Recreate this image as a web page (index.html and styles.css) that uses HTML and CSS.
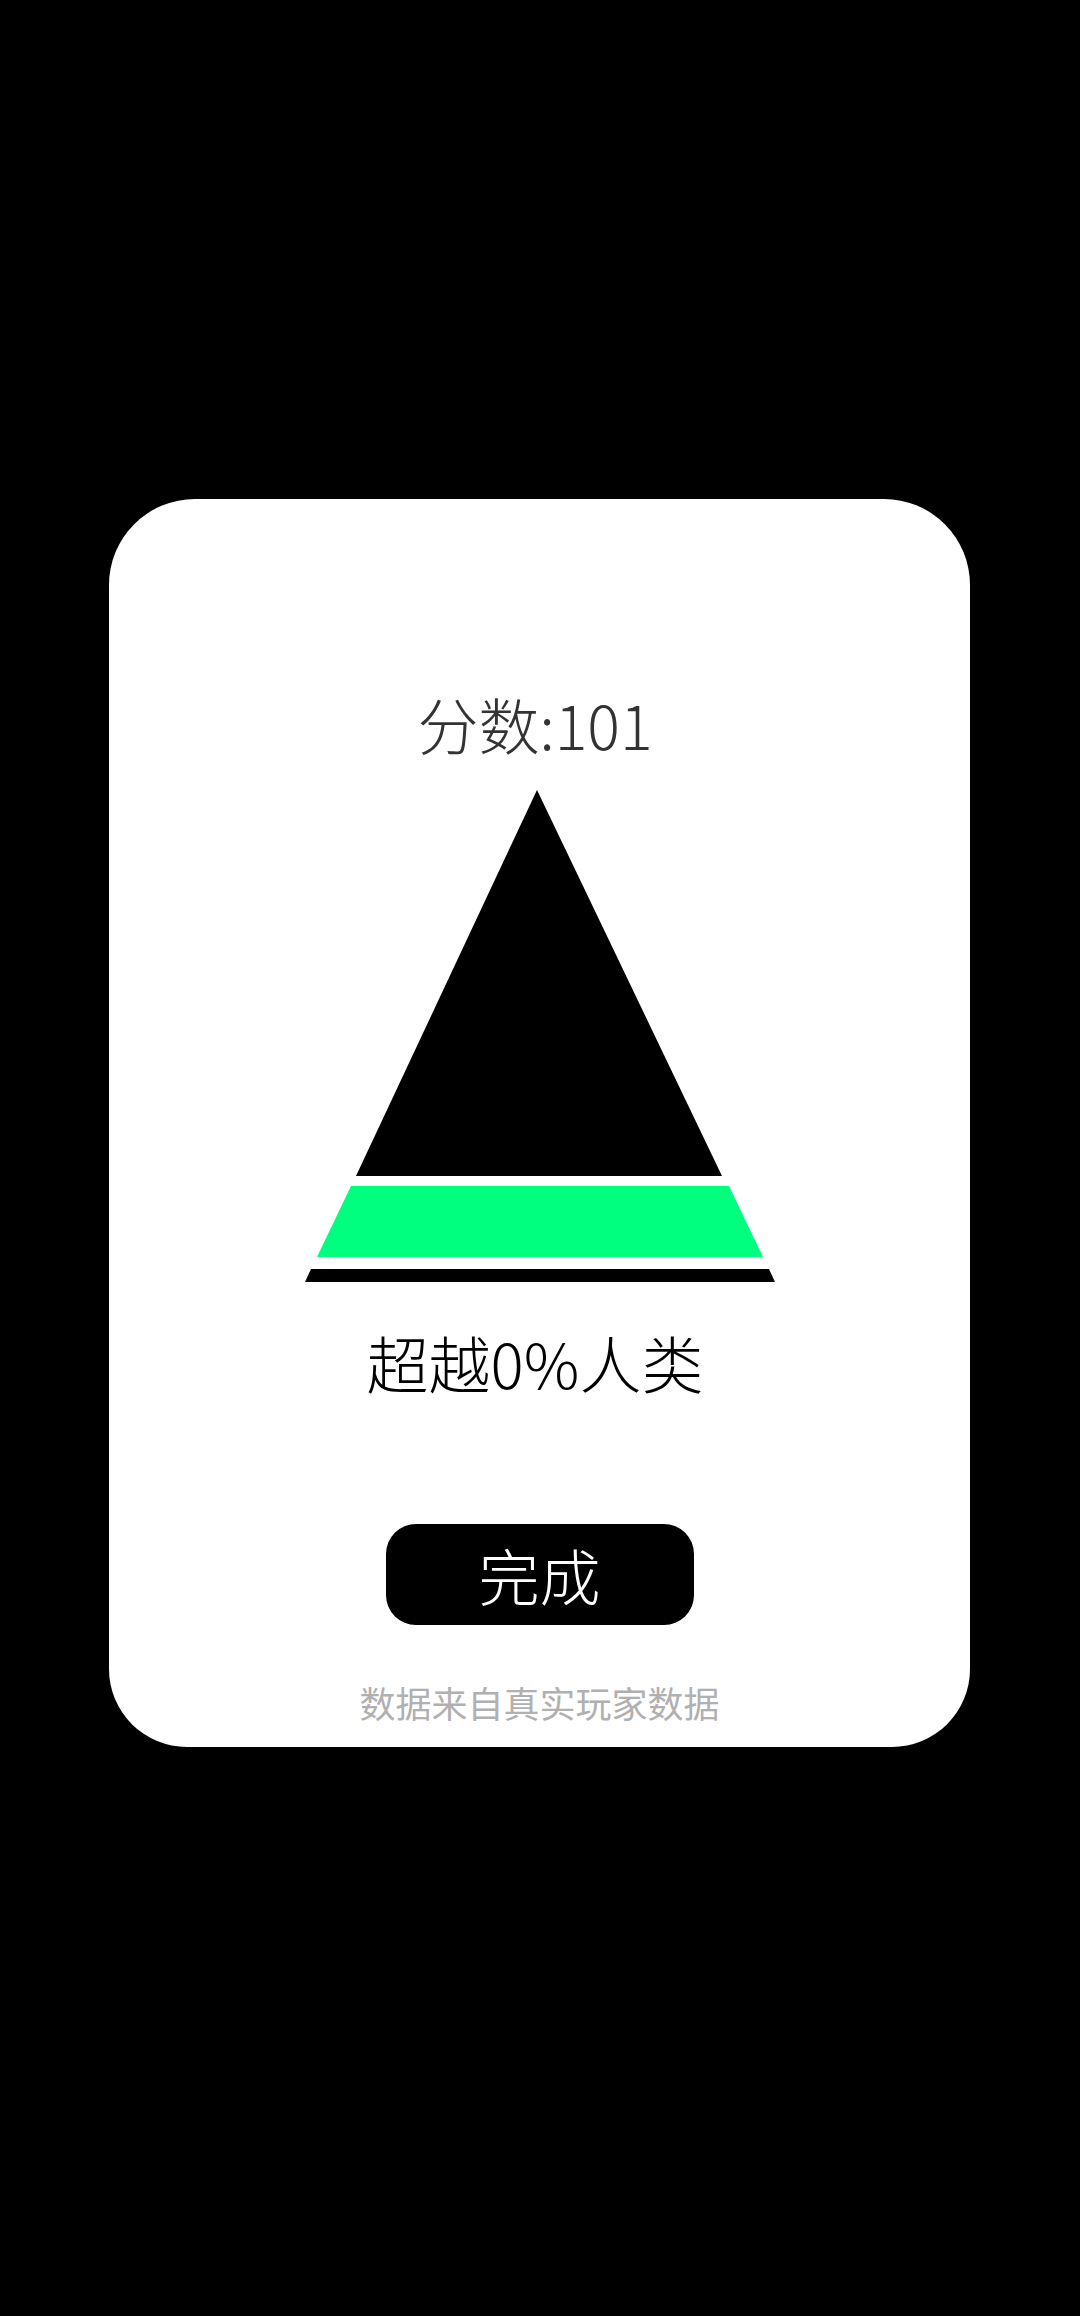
FILE: index.html
```html
<!DOCTYPE html>
<html lang="zh-CN">
<head>
    <meta charset="UTF-8">
    <meta name="viewport" content="width=device-width, initial-scale=1.0">
    <title>分数</title>
    <link rel="stylesheet" href="styles.css">
</head>
<body>
    <div class="result-card">
        <div class="score-text">分数:101</div>

        <!-- 금자탑: 위 검정 삼각형, 중간 초록 띠, 아래 검정 띠 -->
        <svg class="pyramid" width="470" height="495" viewBox="0 0 470 495">
            <polygon points="232,0 417,386 51,386" fill="#000"/>
            <polygon points="46,396 424,396 458,467 12,467" fill="#00ff7f"/>
            <polygon points="6,479 464,479 470,492 0,492" fill="#000"/>
        </svg>

        <div class="rank-text">超越0%人类</div>

        <button class="done-btn">完成</button>

        <div class="source-text">数据来自真实玩家数据</div>
    </div>
</body>
</html>
```

FILE: styles.css
```css
* {
    margin: 0;
    padding: 0;
    box-sizing: border-box;
    font-family: 'Noto Sans CJK SC', 'Noto Sans', sans-serif;
}

body {
    background-color: #000;
    width: 1080px;
    height: 2316px;
    overflow: hidden;
    padding-top: 499px;
}

.result-card {
    width: 861px;
    height: 1248px;
    margin-left: 109px;
    background: #fff;
    border-radius: 86px 86px 78px 78px;
    padding-top: 185px;
    display: flex;
    flex-direction: column;
    align-items: center;
}

.score-text {
    margin-right: 9px;
    font-size: 61px;
    line-height: 80px;
    font-weight: 300;
    color: #333;
}

.pyramid {
    display: block;
    margin-top: 26px;
}

.rank-text {
    margin-top: 37px;
    margin-right: 9px;
    font-size: 62px;
    line-height: 80px;
    font-weight: 300;
    color: #000;
}

.done-btn {
    margin-top: 122px;
    width: 308px;
    height: 101px;
    border: none;
    border-radius: 30px;
    background: #000;
    color: #fff;
    font-size: 61px;
    font-weight: 300;
    line-height: 1;
}

.source-text {
    margin-top: 52px;
    font-size: 36px;
    line-height: 50px;
    color: #b0b0b0;
}
```
